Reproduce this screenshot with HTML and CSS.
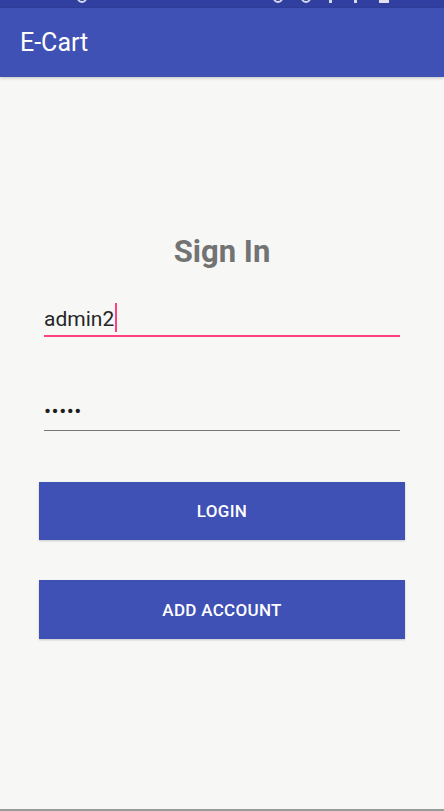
FILE: index.html
```html
<!DOCTYPE html>
<html lang="en">
<head>
<meta charset="utf-8">
<title>E-Cart</title>
<link rel="stylesheet" href="styles.css">
</head>
<body>
<div class="screen">
  <div class="statusbar">
    <div class="status-inner">
      <div class="status-left">
        <span class="time">11:46</span>
        <span class="st-ring st-ring-left"></span>
      </div>
      <div class="status-right">
        <span class="st-ring"></span>
        <span class="st-ring"></span>
        <span class="st-tick"></span>
        <span class="st-tick"></span>
        <span class="st-battery"></span>
        <span class="pct">100%</span>
      </div>
    </div>
  </div>
  <header class="appbar">
    <h1 class="appbar-title">E-Cart</h1>
  </header>
  <main class="content">
    <h2 class="title">Sign In</h2>
    <div class="field field-active">
      <span class="field-text">admin2</span><span class="cursor"></span>
    </div>
    <div class="field field-idle">
      <span class="field-text dots">•••••</span>
    </div>
    <button class="btn btn-login" type="button">LOGIN</button>
    <button class="btn btn-add" type="button">ADD ACCOUNT</button>
  </main>
  <div class="navline"></div>
</div>
</body>
</html>
```
FILE: styles.css
```css
* { box-sizing: border-box; }

html, body {
  margin: 0;
  padding: 0;
  background: #f7f8f6;
}

body {
  font-family: Roboto, "Noto Sans", "Liberation Sans", sans-serif;
}

.screen {
  height: 811px;
  display: flex;
  flex-direction: column;
  overflow: hidden;
}

.statusbar {
  height: 8px;
  flex: 0 0 8px;
  background: #3140a0;
  overflow: hidden;
}

.status-inner {
  margin-top: -11px;
  height: 16px;
  line-height: 16px;
  font-size: 16px;
  color: rgba(255, 255, 255, 0.8);
  display: flex;
  justify-content: space-between;
  padding: 0 4px 0 12px;
}

.status-left,
.status-right {
  display: flex;
  align-items: flex-end;
  height: 14px;
}

.time { letter-spacing: 1px; }

.st-ring {
  display: inline-block;
  width: 10px;
  height: 10px;
  border: 2px solid rgba(255, 255, 255, 0.8);
  border-radius: 50%;
  margin-right: 18px;
}

.st-ring-left { margin-left: 20px; margin-right: 0; }

.st-tick {
  display: inline-block;
  width: 3px;
  height: 6px;
  background: rgba(255, 255, 255, 0.8);
  margin-right: 22px;
}

.st-battery {
  display: inline-block;
  width: 10px;
  height: 10px;
  background: rgba(255, 255, 255, 0.85);
  margin-right: 8px;
}

.pct { letter-spacing: 1px; }

.appbar {
  height: 69px;
  flex: 0 0 69px;
  background: #3f51b5;
  display: flex;
  align-items: center;
  padding-left: 20px;
  box-shadow: 0 1px 3px rgba(0, 0, 0, 0.22);
  position: relative;
  z-index: 1;
}

.appbar-title {
  margin: 0;
  font-size: 25px;
  font-weight: 400;
  color: #ffffff;
  line-height: 30px;
}

.content {
  flex: 1 1 auto;
  padding: 0 39px;
  display: flex;
  flex-direction: column;
}

.title {
  margin: 157px 0 0;
  height: 36px;
  line-height: 36px;
  font-size: 31px;
  font-weight: 700;
  color: #737373;
  text-align: center;
}

.field {
  margin: 0 5px;
  height: 32px;
  line-height: 32px;
  font-size: 21px;
  color: #262626;
  white-space: nowrap;
}

.field-active {
  margin-top: 33px;
  height: 34px;
  border-bottom: 2px solid #ff4081;
}

.cursor {
  display: inline-block;
  width: 2px;
  height: 29px;
  margin-left: 1px;
  background: #ff4081;
  vertical-align: -6px;
}

.field-idle {
  margin-top: 58px;
  height: 36px;
  padding-bottom: 3px;
  border-bottom: 1px solid #777777;
}

.dots {
  letter-spacing: 0.5px;
  color: #1e1e1e;
}

.btn {
  display: block;
  width: 100%;
  border: 0;
  margin: 0;
  padding: 0;
  background: #3f51b5;
  color: #ffffff;
  font-family: Roboto, "Noto Sans", "Liberation Sans", sans-serif;
  font-size: 17px;
  font-weight: 500;
  letter-spacing: 0.3px;
  box-shadow: 0 1px 2px rgba(0, 0, 0, 0.2);
}

.btn-login {
  margin-top: 51px;
  height: 58px;
}

.btn-add {
  margin-top: 40px;
  height: 59px;
}

.navline {
  height: 2px;
  flex: 0 0 2px;
  background: #9a9a9a;
}
```
